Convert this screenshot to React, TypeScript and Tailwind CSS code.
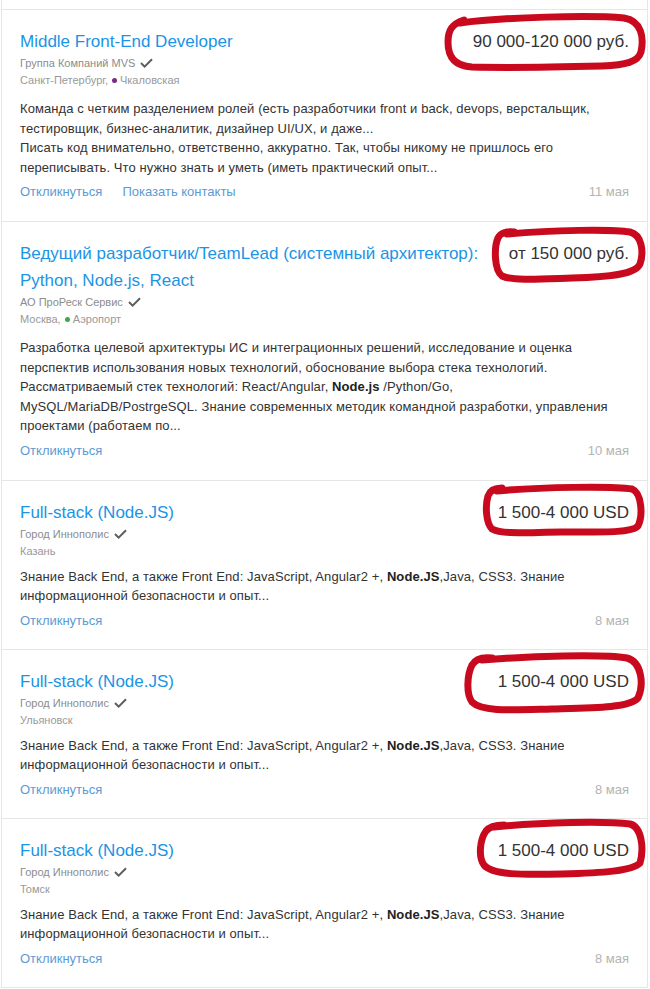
import React from "react";

interface Vacancy {
  id: number;
  title: string;
  salary: string;
  company: string;
  city: string;
  metro?: { name: string; color: string };
  blocks: React.ReactNode[];
  contacts?: boolean;
  date: string;
  circle: string;
}

const fsDesc = (
  <>
    Знание Back End, а также Front End: JavaScript, Angular2 +, <b className="font-bold text-[#222]">Node.JS</b>,Java, CSS3. Знание
    информационной безопасности и опыт...
  </>
);

const vacancies: Vacancy[] = [
  {
    id: 1,
    title: "Middle Front-End Developer",
    salary: "90 000-120 000 руб.",
    company: "Группа Компаний MVS",
    city: "Санкт-Петербург,",
    metro: { name: "Чкаловская", color: "#7a2b86" },
    blocks: [
      "Команда с четким разделением ролей (есть разработчики front и back, devops, верстальщик, тестировщик, бизнес-аналитик, дизайнер UI/UX, и даже...",
      "Писать код внимательно, ответственно, аккуратно. Так, чтобы никому не пришлось его переписывать. Что нужно знать и уметь (иметь практический опыт...",
    ],
    contacts: true,
    date: "11 мая",
    circle:
      "M458 13 C500 7, 590 5, 622 8 C640 11, 642 28, 639 42 C636 52, 624 55, 600 56 C560 57, 510 58, 470 57 C451 56, 446 45, 446 32 C446 20, 450 14, 462 10",
  },
  {
    id: 2,
    title: "Ведущий разработчик/TeamLead (системный архитектор): Python, Node.js, React",
    salary: "от 150 000 руб.",
    company: "АО ПроРеск Сервис",
    city: "Москва,",
    metro: { name: "Аэропорт", color: "#3aaa45" },
    blocks: [
      "Разработка целевой архитектуры ИС и интеграционных решений, исследование и оценка перспектив использования новых технологий, обоснование выбора стека технологий.",
      <>
        Рассматриваемый стек технологий: React/Angular, <b className="font-bold text-[#222]">Node.js</b> /Python/Go,
        MySQL/MariaDB/PostrgeSQL. Знание современных методик командной разработки, управления проектами (работаем по...
      </>,
    ],
    date: "10 мая",
    circle:
      "M505 12 C550 8, 610 7, 628 10 C640 13, 642 30, 638 42 C634 52, 610 55, 570 56 C540 57, 510 59, 500 54 C492 48, 492 25, 496 16 C498 11, 505 9, 512 10",
  },
  {
    id: 3,
    title: "Full-stack (Node.JS)",
    salary: "1 500-4 000 USD",
    company: "Город Иннополис",
    city: "Казань",
    blocks: [fsDesc],
    date: "8 мая",
    circle:
      "M495 10 C540 6, 610 5, 630 8 C640 12, 641 35, 636 45 C630 52, 600 51, 560 51 C530 51, 500 54, 490 48 C484 42, 483 25, 486 15 C488 9, 494 7, 500 7",
  },
  {
    id: 4,
    title: "Full-stack (Node.JS)",
    salary: "1 500-4 000 USD",
    company: "Город Иннополис",
    city: "Ульяновск",
    blocks: [fsDesc],
    date: "8 мая",
    circle:
      "M480 10 C530 6, 600 4, 625 8 C640 12, 642 35, 636 48 C628 58, 590 58, 550 59 C510 60, 480 62, 470 52 C464 44, 465 25, 470 15 C474 8, 482 7, 490 8",
  },
  {
    id: 5,
    title: "Full-stack (Node.JS)",
    salary: "1 500-4 000 USD",
    company: "Город Иннополис",
    city: "Томск",
    blocks: [fsDesc],
    date: "8 мая",
    circle:
      "M492 8 C540 3, 605 2, 628 5 C640 8, 642 30, 638 44 C630 52, 600 54, 560 55 C520 56, 490 56, 482 46 C476 38, 478 20, 484 12 C488 7, 495 6, 502 6",
  },
];

function Check() {
  return (
    <svg width="13" height="10" viewBox="0 0 13 10" className="ml-[5px] inline-block -mt-[2px]">
      <path d="M1 5 L4.6 8.6 L12 1.2" stroke="#5e5e5e" strokeWidth="2" fill="none" />
    </svg>
  );
}

function VacancyCard({ v }: { v: Vacancy }) {
  return (
    <div
      className={
        v.metro
          ? "relative border-t border-[#e6e6e6] pl-[18px] pr-[18px] pt-[18px] pb-[20px]"
          : "relative border-t border-[#e6e6e6] pl-[18px] pr-[18px] pt-[18px] pb-[19px]"
      }
    >
      <div className="flex items-start justify-between gap-[24px]">
        <a className="flex-1 text-[17px] leading-[27px] text-[#1a94e6]">{v.title}</a>
        <div className="shrink-0 whitespace-nowrap text-[17px] leading-[27px] text-[#333]">{v.salary}</div>
      </div>
      <div className="text-[11px] leading-[16px] text-[#8c8c8c]">
        {v.company}
        <Check />
      </div>
      <div
        className={
          v.metro
            ? "mt-[1px] pb-[3px] flex items-center text-[11px] leading-[16px] text-[#999]"
            : "mt-[1px] flex items-center text-[11px] leading-[16px] text-[#999]"
        }
      >
        <span>{v.city}</span>
        {v.metro && (
          <>
            <span className="ml-[4px] mr-[3px] inline-block h-[5px] w-[5px] rounded-full" style={{ backgroundColor: v.metro.color }} />
            <span>{v.metro.name}</span>
          </>
        )}
      </div>
      <div className="mt-[8px] text-[13px] leading-[19.5px] tracking-[0.09px] text-[#333]">
        {v.blocks.map((b, i) => (
          <div key={i}>{b}</div>
        ))}
      </div>
      <div className="mt-[6px] flex items-center text-[13px] leading-[18px]">
        <a className="text-[#5b9bd5]">Откликнуться</a>
        {v.contacts && <a className="ml-[20px] text-[#5b9bd5]">Показать контакты</a>}
        <span className="ml-auto text-[#b3b3b3]">{v.date}</span>
      </div>
      <svg className="pointer-events-none absolute left-0 top-0 h-full w-full overflow-visible">
        <path d={v.circle} stroke="#c90a1e" strokeWidth="7" fill="none" strokeLinecap="round" strokeLinejoin="round" />
      </svg>
    </div>
  );
}

export default function App() {
  return (
    <div className="min-h-[989px] bg-white font-['Liberation_Sans',Arial,sans-serif]">
      <div className="ml-[1px] w-[647px] border-x border-[#e6e6e6] pt-[9px]">
        <div className="border-b border-[#e6e6e6]">
          {vacancies.map((v) => (
            <VacancyCard key={v.id} v={v} />
          ))}
        </div>
      </div>
    </div>
  );
}
